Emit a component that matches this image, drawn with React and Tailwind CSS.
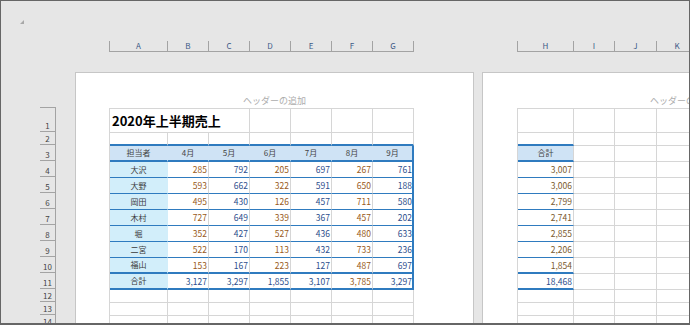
import React from "react";

const FONT = { fontFamily: '"Noto Sans CJK JP", "Noto Sans", sans-serif' };

const ORANGE = "text-[#98591a]";
const BLUE = "text-[#2d4e8c]";

const DATA = [
  ["大沢", ["285", "792", "205", "697", "267", "761"], "3,007"],
  ["大野", ["593", "662", "322", "591", "650", "188"], "3,006"],
  ["岡田", ["495", "430", "126", "457", "711", "580"], "2,799"],
  ["木村", ["727", "649", "339", "367", "457", "202"], "2,741"],
  ["堀", ["352", "427", "527", "436", "480", "633"], "2,855"],
  ["二宮", ["522", "170", "113", "432", "733", "236"], "2,206"],
  ["福山", ["153", "167", "223", "127", "487", "697"], "1,854"],
];
const TOTAL = ["3,127", "3,297", "1,855", "3,107", "3,785", "3,297"];
const TOTAL_COLORS = [BLUE, BLUE, BLUE, BLUE, ORANGE, BLUE];
const NUM_COLORS = [ORANGE, BLUE, ORANGE, BLUE, ORANGE, BLUE];
const MONTHS = ["4月", "5月", "6月", "7月", "8月", "9月"];

const W = ["w-[58px]", "w-[41px]", "w-[41px]", "w-[41px]", "w-[41px]", "w-[41px]", "w-[41px]"];
const W2 = ["w-[56px]", "w-[41px]", "w-[42px]", "w-[41px]"];

const GRAYR = "border-r border-r-[#d6d6d6]";
const GRAYB = "border-b border-b-[#d6d6d6]";

function Cell({ className = "", children }) {
  return <div className={`shrink-0 flex items-center ${className}`}>{children}</div>;
}

function PlainRow({ h, widths }) {
  return (
    <div className="flex">
      {widths.map((w, i) => (
        <Cell key={i} className={`${w} ${h} ${GRAYR} ${GRAYB}`} />
      ))}
    </div>
  );
}

function Page1Grid() {
  const blueB1 = "border-b border-b-[#2f7bbf]";
  const blueB2 = "border-b-2 border-b-[#2f7bbf]";
  return (
    <div className="ml-[33px] border-t border-l border-[#d6d6d6] w-fit">
      {/* row 1 */}
      <div className="flex">
        <Cell className={`w-[140px] h-[24px] ${GRAYR} ${GRAYB} pl-[2px]`}>
          <span className="text-[13px] font-bold text-black leading-none">2020年上半期売上</span>
        </Cell>
        {W.slice(3).map((w, i) => (
          <Cell key={i} className={`${w} h-[24px] ${GRAYR} ${GRAYB}`} />
        ))}
      </div>
      {/* row 2 */}
      <div className="flex">
        {W.map((w, i) => (
          <Cell key={i} className={`${w} h-[13px] ${GRAYR} ${blueB2}`} />
        ))}
      </div>
      {/* row 3 header */}
      <div className="flex">
        {["担当者", ...MONTHS].map((t, i) => (
          <Cell
            key={i}
            className={`${W[i]} h-[16px] bg-[#cfe3f5] justify-center ${blueB2} ${
              i === 6 ? "border-r-2 border-r-[#2f7bbf]" : "border-r border-r-transparent"
            } text-[8px] text-[#444]`}
          >
            {t}
          </Cell>
        ))}
      </div>
      {/* data rows */}
      {DATA.map(([name, vals], r) => (
        <div className="flex" key={r}>
          <Cell className={`${W[0]} h-[16px] bg-[#d2eefa] justify-center border-r border-r-transparent ${r === 6 ? blueB2 : blueB1} text-[8px] text-[#3a3a3a]`}>
            {name}
          </Cell>
          {vals.map((v, i) => (
            <Cell
              key={i}
              className={`${W[i + 1]} h-[16px] justify-end ${r === 6 ? blueB2 : blueB1} ${
                i === 5 ? "border-r-2 border-r-[#2f7bbf] pr-0" : `${GRAYR} pr-[1px]`
              } text-[8.5px] ${NUM_COLORS[i]}`}
            >
              {v}
            </Cell>
          ))}
        </div>
      ))}
      {/* total row */}
      <div className="flex">
        <Cell className={`${W[0]} h-[16px] bg-[#d2eefa] justify-center border-r border-r-transparent ${blueB2} text-[8px] text-[#3a3a3a]`}>
          合計
        </Cell>
        {TOTAL.map((v, i) => (
          <Cell
            key={i}
            className={`${W[i + 1]} h-[16px] justify-end ${blueB2} ${
              i === 5 ? "border-r-2 border-r-[#2f7bbf] pr-0" : `${GRAYR} pr-[1px]`
            } text-[8.5px] ${TOTAL_COLORS[i]}`}
          >
            {v}
          </Cell>
        ))}
      </div>
      <PlainRow h="h-[13px]" widths={W} />
      <PlainRow h="h-[13px]" widths={W} />
      <PlainRow h="h-[13px]" widths={W} />
    </div>
  );
}

function Page2Grid() {
  const blueB1 = "border-b border-b-[#2f7bbf]";
  const blueB2 = "border-b-2 border-b-[#2f7bbf]";
  const rest = W2.slice(1);
  const RestCells = ({ h }) =>
    rest.map((w, i) => <Cell key={i} className={`${w} ${h} ${GRAYR} ${GRAYB}`} />);
  return (
    <div className="ml-[34px] border-t border-l border-[#d6d6d6] w-fit">
      <PlainRow h="h-[24px]" widths={W2} />
      <div className="flex">
        <Cell className={`${W2[0]} h-[13px] ${GRAYR} ${blueB2}`} />
        <RestCells h="h-[13px]" />
      </div>
      <div className="flex">
        <Cell className={`${W2[0]} h-[16px] bg-[#cfe3f5] justify-center ${GRAYR} ${blueB2} text-[8px] text-[#444]`}>
          合計
        </Cell>
        <RestCells h="h-[16px]" />
      </div>
      {DATA.map(([, , tot], r) => (
        <div className="flex" key={r}>
          <Cell className={`${W2[0]} h-[16px] justify-end pr-[1px] ${GRAYR} ${r === 6 ? blueB2 : blueB1} text-[8.5px] text-[#7a5a2e]`}>
            {tot}
          </Cell>
          <RestCells h="h-[16px]" />
        </div>
      ))}
      <div className="flex">
        <Cell className={`${W2[0]} h-[16px] justify-end pr-[1px] ${GRAYR} ${blueB2} text-[8.5px] ${BLUE}`}>
          18,468
        </Cell>
        <RestCells h="h-[16px]" />
      </div>
      <PlainRow h="h-[13px]" widths={W2} />
      <PlainRow h="h-[13px]" widths={W2} />
      <PlainRow h="h-[13px]" widths={W2} />
    </div>
  );
}

function ColRuler({ cols, closed }) {
  return (
    <div className="flex border-b border-[#a3a3a3] shrink-0">
      {cols.map(([k, w], i) => (
        <div
          key={k}
          className={`${w} h-[10px] border-l border-[#a3a3a3] ${
            closed && i === cols.length - 1 ? "border-r" : ""
          } flex items-center justify-center text-[8px] leading-none text-[#3d5a86]`}
        >
          {k}
        </div>
      ))}
    </div>
  );
}

function RowRuler() {
  const rows = [
    ["1", "h-[24px]"],
    ["2", "h-[13px]"],
    ["3", "h-[16px]"],
    ["4", "h-[16px]"],
    ["5", "h-[16px]"],
    ["6", "h-[16px]"],
    ["7", "h-[16px]"],
    ["8", "h-[16px]"],
    ["9", "h-[16px]"],
    ["10", "h-[16px]"],
    ["11", "h-[16px]"],
    ["12", "h-[13px]"],
    ["13", "h-[13px]"],
    ["14", "h-[13px]"],
  ];
  return (
    <div className="w-[16px] shrink-0 mt-[35px] border-t border-r border-[#a3a3a3]">
      {rows.map(([n, h]) => (
        <div
          key={n}
          className={`${h} border-b border-[#a3a3a3] flex items-end justify-center pb-[1px] text-[8px] leading-none text-[#444]`}
        >
          {n}
        </div>
      ))}
    </div>
  );
}

function PageHeader() {
  return (
    <div className="h-[35px] flex items-end justify-center pb-[1px]">
      <span className="text-[9px] leading-[13px] text-[#adadad] whitespace-nowrap">ヘッダーの追加</span>
    </div>
  );
}

export default function App() {
  return (
    <div
      style={FONT}
      className="w-[690px] h-[325px] overflow-hidden bg-[#e6e6e6] border border-b-2 border-[#666666]"
    >
      {/* top area */}
      <div className="h-[71px] flex flex-col">
        <svg className="ml-[19px] mt-[19px]" width="4" height="4" viewBox="0 0 4 4">
          <polygon points="4,0 4,4 0,4" fill="#a8a8a8" />
        </svg>
        <div className="flex mt-[17px] ml-[108px]">
          <ColRuler
            closed
            cols={[
              ["A", "w-[58px]"],
              ["B", "w-[41px]"],
              ["C", "w-[41px]"],
              ["D", "w-[41px]"],
              ["E", "w-[41px]"],
              ["F", "w-[41px]"],
              ["G", "w-[42px]"],
            ]}
          />
          <div className="ml-[103px] flex">
            <ColRuler
              cols={[
                ["H", "w-[56px]"],
                ["I", "w-[41px]"],
                ["J", "w-[42px]"],
                ["K", "w-[41px]"],
              ]}
            />
          </div>
        </div>
      </div>
      {/* body */}
      <div className="flex items-start">
        <div className="w-[39px] shrink-0" />
        <RowRuler />
        <div className="ml-[19px] w-[399px] h-[300px] shrink-0 bg-white border border-[#c6c6c6]">
          <PageHeader />
          <Page1Grid />
        </div>
        <div className="ml-[8px] w-[399px] h-[300px] shrink-0 bg-white border border-[#c6c6c6]">
          <PageHeader />
          <Page2Grid />
        </div>
      </div>
    </div>
  );
}
